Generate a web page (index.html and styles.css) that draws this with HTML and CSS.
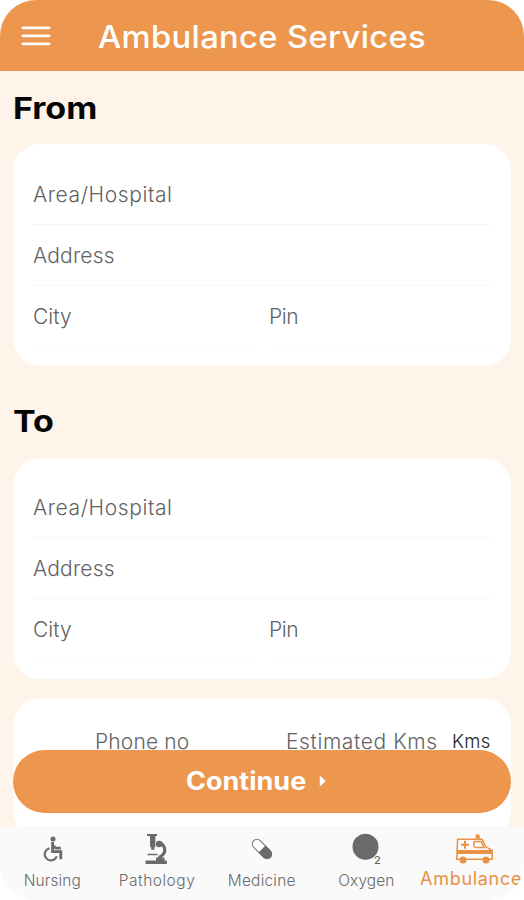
FILE: index.html
```html
<!DOCTYPE html>
<html lang="en">
<head>
<meta charset="utf-8">
<meta name="viewport" content="width=device-width, initial-scale=1">
<title>Ambulance Services</title>
<link rel="stylesheet" href="styles.css">
</head>
<body>
<div class="app">
  <header class="header">
    <svg class="menu" viewBox="0 0 30 22" aria-hidden="true"><path d="M1.8 2.8h26.4M1.8 10.8h26.4M1.8 18.8h26.4"/></svg>
    <h1 class="title">Ambulance Services</h1>
  </header>

  <main class="content">
    <h2 class="heading heading-from">From</h2>
    <section class="card">
      <div class="field area">Area/Hospital</div>
      <div class="field address">Address</div>
      <div class="pair">
        <div class="field faint city">City</div>
        <div class="field faint pin">Pin</div>
      </div>
    </section>

    <h2 class="heading heading-to">To</h2>
    <section class="card card-to">
      <div class="field area">Area/Hospital</div>
      <div class="field address">Address</div>
      <div class="pair">
        <div class="field faint city">City</div>
        <div class="field faint pin">Pin</div>
      </div>
    </section>

    <section class="card contact">
      <span class="phone">Phone no</span>
      <span class="estimate">Estimated Kms</span>
      <span class="unit">Kms</span>
    </section>
  </main>

  <button class="continue" type="button">
    <span class="continue-label">Continue</span>
    <svg class="caret" viewBox="0 0 8 12" aria-hidden="true"><path d="M.8.4 6.8 6 .8 11.6z"/></svg>
  </button>

  <nav class="tabs">
    <a class="tab nursing">
      <svg viewBox="0 0 40 34" aria-hidden="true">
        <circle cx="21" cy="7" r="2.5" class="fill"/>
        <path d="M20.6 10v9.6h8.2v7.6M21 13.8l3 2.3h4.8" class="line thick"/>
        <path d="M17.6 16.2a6.2 6.2 0 1 0 7.2 8" class="line"/>
      </svg>
      <span>Nursing</span>
    </a>
    <a class="tab pathology">
      <svg viewBox="0 0 40 34" aria-hidden="true">
        <path d="M10 2h10v2h-1.6v10.5l-1 1v2.2h-3.2v-2.2l-1.2-1V4h-3zM8.5 28.4h21.4v3.6H8.5z" class="fill"/>
        <path d="M10.5 22.6h10" class="line thin"/>
        <path d="M22 10.5c6.5 2 8.3 10.5 1 14.5v3" class="line arm"/>
        <circle cx="22.2" cy="12" r="3.3" class="fill"/>
        <path d="M19 25.4h8.5v4H19z" class="fill"/>
      </svg>
      <span>Pathology</span>
    </a>
    <a class="tab medicine">
      <svg viewBox="0 0 40 34" aria-hidden="true">
        <g transform="rotate(45 20 17)">
          <rect x="8.3" y="12.4" width="23.4" height="9.2" rx="4.6" class="capsule"/>
          <path d="M20 12h7a5 5 0 0 1 0 10h-7z" class="fill"/>
        </g>
      </svg>
      <span>Medicine</span>
    </a>
    <a class="tab oxygen">
      <svg viewBox="0 0 40 34" aria-hidden="true">
        <circle cx="19.5" cy="14.8" r="13" class="fill"/>
        <text x="28" y="32.4" class="sub">2</text>
      </svg>
      <span>Oxygen</span>
    </a>
    <a class="tab ambulance">
      <svg viewBox="0 0 40 34" aria-hidden="true">
        <path d="M2.6 7.2h24.6l3.6 7.6 6.4 3.6v8.8H1.8z" class="line thin"/>
        <path d="M1.8 18h35.4v4H1.8z" class="fill"/>
        <path d="M10 8.8v8M6 12.8h8" class="line"/>
        <path d="M19.5 9.6h6.7l2.8 5.8h-7.8c-1.8 0-2.6-1.2-2.3-3z" class="line thin"/>
        <path d="M20.6 6.5V4.3a2.1 2.1 0 0 1 4.2 0v2.2z" class="fill"/>
        <circle cx="8" cy="28" r="3.5" class="wheel"/>
        <circle cx="31" cy="28" r="3.5" class="wheel"/>
      </svg>
      <span>Ambulance</span>
    </a>
  </nav>
</div>
</body>
</html>
```

FILE: styles.css
```css
* { box-sizing: border-box; }

body {
  margin: 0;
  background: #fff;
  font-family: Inter, "Open Sans", sans-serif;
}

.app {
  position: relative;
  display: flex;
  flex-direction: column;
  width: 524px;
  height: 900px;
  overflow: hidden;
  border-radius: 36px;
  background: #fff4e9;
}

.header {
  display: flex;
  flex: none;
  align-items: center;
  height: 71px;
  padding-left: 21px;
  background: #ed964d;
  color: #fff;
}

.menu {
  width: 30px;
  height: 22px;
  fill: none;
  stroke: #fff;
  stroke-width: 2.8;
  stroke-linecap: round;
}

.title {
  margin: 2px 0 0 47px;
  font-size: 31px;
  font-weight: 500;
  letter-spacing: 0.3px;
  white-space: nowrap;
  transform: scaleX(1.057);
  transform-origin: left;
}

.content {
  flex: 1;
  min-height: 0;
  overflow: hidden;
  padding: 0 13px;
}

.heading {
  width: 300px;
  height: 73px;
  margin: 0;
  font-size: 30px;
  font-weight: 700;
  line-height: 74px;
  color: #050505;
  transform: scaleX(1.135);
  transform-origin: left;
}

.heading-to { height: 92px; line-height: 110px; }

.card {
  height: 222px;
  padding: 20px 18px 0 19px;
  border-radius: 27px;
  background: #fff;
}

.card-to { height: 221px; padding-top: 19px; }

.field {
  height: 61px;
  padding-left: 1px;
  border-bottom: 1px solid #f7f7f7;
  font-size: 21px;
  font-weight: 340;
  line-height: 61px;
  white-space: nowrap;
  color: #626262;
}

.area { letter-spacing: 0.6px; }
.address { letter-spacing: 0.2px; }
.pin { letter-spacing: -0.4px; }
.faint { border-color: #fcfcfc; }

.pair {
  display: grid;
  grid-template-columns: 224px 225px;
  gap: 12px;
}

.contact {
  display: flex;
  align-items: flex-start;
  height: 140px;
  margin-top: 19px;
  padding: 28px 0 0 82px;
  font-size: 21px;
  font-weight: 320;
  line-height: 32px;
  white-space: nowrap;
  color: #626262;
}

.phone { width: 191px; letter-spacing: 0.15px; }
.estimate { width: 166px; letter-spacing: 0.6px; }
.unit { font-size: 18.5px; font-weight: 350; line-height: 31px; letter-spacing: 0.3px; color: #222; }

.continue {
  position: absolute;
  top: 749.5px;
  left: 13px;
  display: flex;
  align-items: center;
  width: 498px;
  height: 63.5px;
  padding: 0 0 0 173px;
  border: 0;
  border-radius: 32px;
  background: #ed964d;
  color: #fff;
  font: 700 25px/32px Inter, sans-serif;
}

.continue-label {
  transform: scaleX(1.08);
  transform-origin: left;
}

.caret {
  width: 8px;
  height: 12px;
  margin-left: 22px;
  fill: #fff;
}

.tabs {
  display: grid;
  flex: none;
  grid-template-columns: repeat(5, 104.7px);
  height: 74px;
  padding-top: 6px;
  background: #fafafa;
}

.tab {
  display: flex;
  flex-direction: column;
  align-items: center;
  font-size: 15.5px;
  font-weight: 330;
  line-height: 26px;
  white-space: nowrap;
  color: #6a6a6a;
}

.tab svg { width: 40px; height: 34px; overflow: visible; }
.tab span { margin-top: 2px; }
.nursing span { letter-spacing: 0.1px; }
.pathology span { letter-spacing: 0.5px; }
.medicine span { letter-spacing: 0.2px; }
.oxygen span { letter-spacing: 0.1px; }

.fill, .wheel { fill: currentColor; }
.line { fill: none; stroke: currentColor; stroke-width: 2; }
.thick { stroke-width: 2.8; }
.thin { stroke-width: 1.5; }
.arm { stroke-width: 3.2; }
.capsule { fill: #fff; stroke: currentColor; stroke-width: 1; }
.sub { fill: currentColor; font-size: 11px; font-weight: 500; }

.ambulance { color: #e99145; font-size: 18px; font-weight: 380; }
.ambulance svg { margin-left: 8px; }
.ambulance span { margin-top: 0; letter-spacing: 0.7px; }
```
